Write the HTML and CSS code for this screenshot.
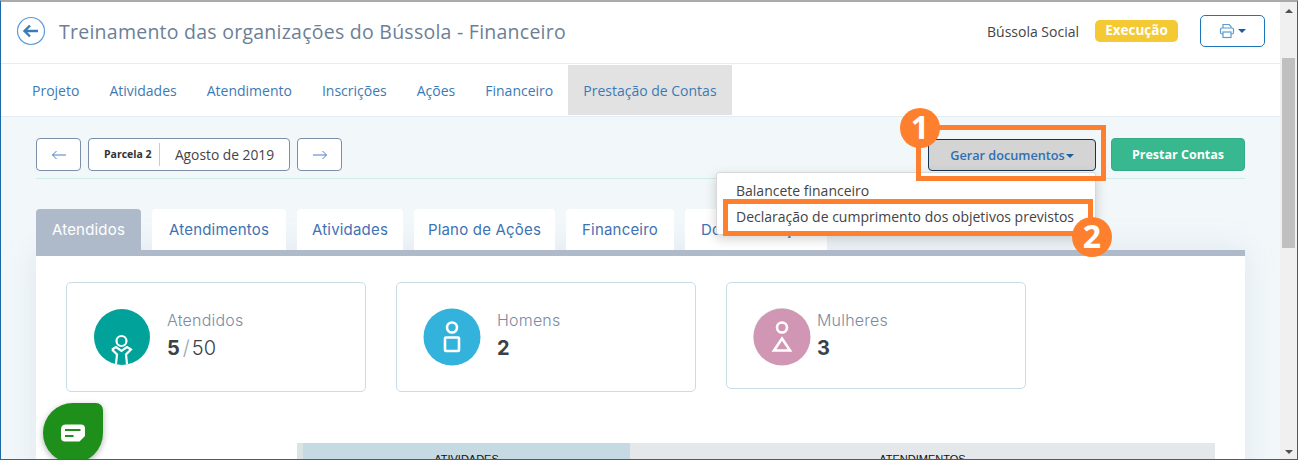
FILE: index.html
```html
<!DOCTYPE html>
<html lang="pt-BR">
<head>
    <meta charset="UTF-8">
    <meta name="viewport" content="width=device-width, initial-scale=1.0">
    <title>Treinamento das organizações do Bússola - Financeiro</title>
    <link rel="stylesheet" href="styles.css">
</head>
<body>
    <div class="window">
        <div class="page">
            <header class="header">
                <a class="back" href="#">
                    <svg width="30" height="30" viewBox="0 0 30 30">
                        <circle cx="15" cy="15" r="13.5" fill="none" stroke="#5b9bdc" stroke-width="1.2"/>
                        <path d="M22 15H9M14 9.5 8.5 15l5.5 5.5" fill="none" stroke="#3b7cb8" stroke-width="2.4"/>
                    </svg>
                </a>
                <h1 class="title">Treinamento das organizações do Bússola - Financeiro</h1>
                <span class="org">Bússola Social</span>
                <span class="badge">Execução</span>
                <button class="print-btn">
                    <svg width="16" height="16" viewBox="0 0 16 16" fill="none" stroke="#5b9bd0" stroke-width="1.2">
                        <path d="M4 5V1.5h6L12 3.5V5"/>
                        <rect x="1.5" y="5" width="13" height="6" rx="1.5"/>
                        <rect x="4" y="9" width="8" height="5.5" fill="#fff"/>
                    </svg>
                    <span class="caret"></span>
                </button>
            </header>

            <nav class="nav">
                <a href="#">Projeto</a>
                <a href="#">Atividades</a>
                <a href="#">Atendimento</a>
                <a href="#">Inscrições</a>
                <a href="#">Ações</a>
                <a href="#">Financeiro</a>
                <a href="#" class="active">Prestação de Contas</a>
            </nav>

            <main class="content">
                <div class="toolbar">
                    <button class="step">
                        <svg width="16" height="10" viewBox="0 0 16 10" fill="none" stroke="#4a7fc0"><path d="M15 5H1.5M5.5 1 1.5 5l4 4"/></svg>
                    </button>
                    <div class="period">
                        <span class="period-num">Parcela 2</span>
                        <span class="period-date">Agosto de 2019</span>
                    </div>
                    <button class="step">
                        <svg width="16" height="10" viewBox="0 0 16 10" fill="none" stroke="#4a7fc0"><path d="M1 5h13.5M10.5 1l4 4-4 4"/></svg>
                    </button>
                    <button class="generate">Gerar documentos<span class="caret"></span></button>
                    <button class="submit">Prestar Contas</button>
                </div>

                <div class="tabs">
                    <a href="#" class="tab active">Atendidos</a>
                    <a href="#" class="tab">Atendimentos</a>
                    <a href="#" class="tab">Atividades</a>
                    <a href="#" class="tab">Plano de Ações</a>
                    <a href="#" class="tab">Financeiro</a>
                    <a href="#" class="tab">Documentação</a>
                </div>

                <section class="panel">
                    <div class="cards">
                        <div class="card">
                            <svg class="card-icon" width="58" height="58" viewBox="0 0 58 58">
                                <defs><clipPath id="clipA"><circle cx="29" cy="29" r="28"/></clipPath></defs>
                                <circle cx="29" cy="29" r="28" fill="#00a29a"/>
                                <g clip-path="url(#clipA)" fill="none" stroke="#fff" stroke-width="2.2">
                                    <circle cx="28.500" cy="33" r="5"/>
                                    <path d="M19 41.500l4-2.500 5.500 4 5.500-4 4 2.500-5 5 1.500 14M19 41.500l5 5-1.500 14"/>
                                </g>
                            </svg>
                            <div>
                                <div class="card-label">Atendidos</div>
                                <div class="card-value"><b>5</b><span class="slash">/</span>50</div>
                            </div>
                        </div>
                        <div class="card">
                            <svg class="card-icon" width="58" height="58" viewBox="0 0 58 58">
                                <circle cx="29" cy="29" r="28.500" fill="#33b3db"/>
                                <g fill="none" stroke="#fff" stroke-width="2.600">
                                    <circle cx="29" cy="19.500" r="5"/>
                                    <rect x="22" y="29.500" width="14" height="13.500" rx="1"/>
                                </g>
                            </svg>
                            <div>
                                <div class="card-label">Homens</div>
                                <div class="card-value"><b>2</b></div>
                            </div>
                        </div>
                        <div class="card card-short">
                            <svg class="card-icon" width="58" height="58" viewBox="0 0 58 58">
                                <circle cx="28.500" cy="28.500" r="28.500" fill="#dfeedd"/>
                                <circle cx="29" cy="29" r="28.500" fill="#d096b3"/>
                                <g fill="none" stroke="#fff" stroke-width="2.600">
                                    <circle cx="29" cy="19.500" r="5"/>
                                    <path d="M29 30.500 37 42.500H21Z"/>
                                </g>
                            </svg>
                            <div>
                                <div class="card-label">Mulheres</div>
                                <div class="card-value"><b>3</b></div>
                            </div>
                        </div>
                    </div>
                    <div class="summary">
                        <div class="summary-a">ATIVIDADES</div>
                        <div class="summary-b">ATENDIMENTOS</div>
                    </div>
                </section>
            </main>
        </div>

        <div class="scrollbar">
            <span class="arrow-up"></span>
            <span class="thumb"></span>
            <span class="arrow-down"></span>
        </div>

        <div class="menu">
            <a href="#">Balancete financeiro</a>
            <a href="#">Declaração de cumprimento dos objetivos previstos</a>
        </div>

        <a href="#" class="chat">
            <svg width="26" height="20" viewBox="0 0 26 20">
                <path d="M6 1.500h15q4 0 4 4v7.500l-5.500 5.500H5q-4 0-4-4v-8q0-5 5-5Z" fill="#fff"/>
                <path d="M5 7h15.500M5 13h8.500" stroke="#1f8f1b" stroke-width="2"/>
            </svg>
        </a>

        <!-- marcacoes do tutorial -->
        <div class="mark mark-one"></div>
        <div class="mark mark-two"></div>
        <div class="num num-one">1</div>
        <div class="num num-two">2</div>
    </div>
</body>
</html>
```

FILE: styles.css
```css
/* General Reset */
* {
    margin: 0;
    padding: 0;
    box-sizing: border-box;
}
html, body {
    height: 100%;
    overflow: hidden;
}
body {
    font-family: 'Open Sans', sans-serif;
    color: #333;
    background: #fff;
}
a {
    text-decoration: none;
}
button {
    font-family: inherit;
    background: #fff;
    cursor: pointer;
}
.window {
    position: relative;
    display: flex;
    height: 460px;
    overflow: hidden;
    border: 1px solid #1b6aa5;
    border-top: 2px solid #aaa;
}
.page {
    flex: 1;
    min-width: 0;
    display: flex;
    flex-direction: column;
}

/* Header */
.header {
    height: 62px;
    display: flex;
    align-items: center;
    padding: 0 15px 3px 15px;
    border-bottom: 1px solid #e2eef3;
    flex-shrink: 0;
}
.back {
    display: flex;
    margin-right: 13px;
}
.title {
    flex: 1;
    font-size: 19.500px;
    font-weight: 400;
    color: #6d7f96;
    letter-spacing: 0.25px;
}
.org {
    font-size: 14px;
    color: #444;
    margin-right: 16px;
}
.badge {
    width: 83px;
    height: 22px;
    line-height: 21px;
    text-align: center;
    background: #f4c934;
    color: #fff;
    font-size: 13.500px;
    font-weight: 700;
    border-radius: 5px;
    margin-right: 22px;
}
.print-btn {
    width: 65px;
    height: 32px;
    display: flex;
    align-items: center;
    justify-content: center;
    gap: 3px;
    border: 1px solid #1b75bb;
    border-radius: 5px;
}
.caret {
    display: inline-block;
    border-left: 4px solid transparent;
    border-right: 4px solid transparent;
    border-top: 4px solid #1b5f9e;
}

/* Nav */
.nav {
    height: 53px;
    display: flex;
    padding: 1px 0 1px 16px;
    border-bottom: 1px solid #e2eef3;
    flex-shrink: 0;
}
.nav a {
    display: flex;
    align-items: center;
    padding: 0 15px;
    font-size: 14px;
    color: #3d7ab5;
}
.nav a.active {
    background: #e2e2e2;
}

/* Content */
.content {
    flex: 1;
    min-height: 0;
    padding: 0 35px;
    background: #f2f7fa;
}
.toolbar {
    display: flex;
    align-items: center;
    height: 62px;
    padding-top: 21px;
    border-bottom: 1px solid #cfece8;
    padding-bottom: 7px;
    margin-bottom: 30px;
}
.step {
    width: 45px;
    height: 33px;
    display: flex;
    align-items: center;
    justify-content: center;
    border: 1px solid #7d8fa8;
    border-radius: 4px;
}
.period {
    width: 202px;
    height: 33px;
    margin: 0 7px;
    display: flex;
    align-items: center;
    background: #fff;
    border: 1px solid #7d8fa8;
    border-radius: 4px;
}
.period-num {
    width: 71px;
    height: 23px;
    line-height: 23px;
    padding-left: 15px;
    font-size: 10.500px;
    font-weight: 700;
    color: #333;
    border-right: 1px solid #c5ccd5;
}
.period-date {
    flex: 1;
    text-align: center;
    font-size: 13.800px;
    color: #444;
}
.generate {
    width: 168px;
    height: 32px;
    margin-left: auto;
    background: #d4d4d4;
    color: #2f6fb5;
    font-size: 12.700px;
    font-weight: 600;
    border: 1px solid #17344f;
    border-radius: 4px;
}
.generate .caret {
    margin-left: 1px;
    vertical-align: middle;
}
.submit {
    width: 134px;
    height: 33px;
    margin-left: 15px;
    background: #37b88f;
    color: #fff;
    font-size: 12.500px;
    font-weight: 700;
    border: 1px solid #34ad87;
    border-radius: 4px;
}

/* Tabs */
.tabs {
    display: flex;
    height: 41px;
    gap: 11px;
}
.tab {
    display: flex;
    align-items: center;
    justify-content: center;
    background: #fff;
    color: #3f72b3;
    font-family: 'Inter', sans-serif;
    font-size: 15px;
    font-weight: 400;
    letter-spacing: 0.2px;
    border-radius: 4px 4px 0 0;
    width: 134px;
}
.tab:nth-child(1) { width: 105px; }
.tab:nth-child(3) { width: 106px; }
.tab:nth-child(4) { width: 141px; }
.tab:nth-child(5) { width: 108px; }
.tab:nth-child(6) { width: 142px; }
.tab.active {
    background: #aeb9ca;
    color: #fff;
}

/* Panel */
.panel {
    height: 300px;
    padding-top: 26px;
    background: #fff;
    border-top: 6px solid #aeb9ca;
    box-shadow: 0 0 30px rgba(140, 165, 190, 0.18);
}
.cards {
    display: flex;
    align-items: flex-start;
    gap: 30px;
    padding-left: 30px;
}
.card {
    width: 300px;
    height: 110px;
    display: flex;
    align-items: center;
    gap: 16px;
    padding: 0 0 0 26px;
    border: 1px solid #c8dce6;
    border-radius: 5px;
}
.card-short {
    height: 107px;
    gap: 6px;
    padding-top: 3px;
}
.card-label {
    font-family: 'Inter', sans-serif;
    font-size: 16px;
    font-weight: 300;
    letter-spacing: 0.2px;
    color: #7d8aa3;
    margin-bottom: 5px;
}
.card-value {
    font-family: 'Inter', sans-serif;
    font-size: 20px;
    font-weight: 300;
    line-height: 27px;
    color: #3a4148;
    margin-bottom: 3px;
}
.card-value b {
    font-weight: 700;
}
.slash {
    color: #9aa3ad;
    margin: 0 2px 0 3px;
}
.summary {
    display: flex;
    height: 40px;
    margin: 51px 30px 0 261px;
    font-family: 'Liberation Sans', sans-serif;
    font-size: 11px;
    color: #111;
    text-align: center;
}
.summary-a {
    width: 333px;
    padding-top: 10px;
    background: #c6dae3;
    border-left: 6px solid #dbe3e6;
}
.summary-b {
    flex: 1;
    padding-top: 10px;
    background: #e4e8eb;
}

/* Scrollbar */
.scrollbar {
    position: relative;
    width: 17px;
    flex-shrink: 0;
    background: #f0f0f0;
}
.thumb {
    position: absolute;
    left: 2px;
    top: 56px;
    width: 13px;
    height: 190px;
    background: #c0c0c0;
}
.arrow-up, .arrow-down {
    position: absolute;
    left: 5px;
    border-left: 4px solid transparent;
    border-right: 4px solid transparent;
}
.arrow-up {
    top: 7px;
    border-bottom: 4px solid #505050;
}
.arrow-down {
    bottom: 5px;
    border-top: 4px solid #505050;
}

/* Dropdown */
.menu {
    position: absolute;
    left: 715px;
    top: 170px;
    width: 380px;
    height: 63px;
    padding-top: 6px;
    background: #fff;
    border: 1px solid #d8d8d8;
    border-radius: 3px;
    box-shadow: 0 4px 12px rgba(0, 0, 0, 0.18);
}
.menu a {
    display: block;
    height: 26px;
    line-height: 24px;
    padding-left: 19px;
    font-size: 14px;
    color: #444;
}

/* Chat */
.chat {
    position: absolute;
    left: 42px;
    top: 401px;
    width: 60px;
    height: 60px;
    display: flex;
    align-items: center;
    justify-content: center;
    padding-bottom: 1px;
    background: #1f8f1b;
    border-radius: 50% 7px 50% 50%;
    box-shadow: 0 2px 6px rgba(0, 0, 0, 0.3);
}

/* Tutorial marks */
.mark {
    position: absolute;
    border: 5px solid #fe7f2d;
}
.mark-one {
    left: 915px;
    top: 123px;
    width: 190px;
    height: 56px;
}
.mark-two {
    left: 722px;
    top: 197px;
    width: 370px;
    height: 37px;
}
.num {
    position: absolute;
    width: 40px;
    height: 40px;
    line-height: 38px;
    text-align: center;
    background: #fe7f2d;
    color: #fff;
    font-family: 'Open Sans', sans-serif;
    font-size: 32px;
    font-weight: 700;
    border-radius: 50%;
}
.num-one {
    left: 899px;
    top: 106px;
}
.num-two {
    left: 1071px;
    top: 215px;
}
```
